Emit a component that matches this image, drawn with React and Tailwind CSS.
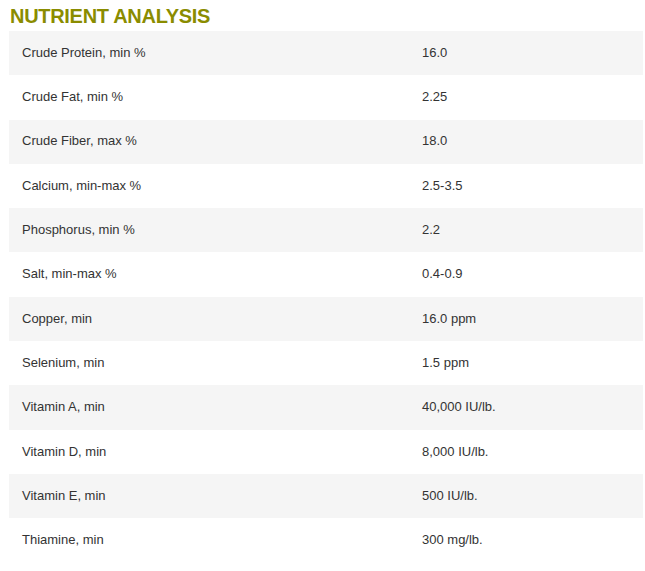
const rows = [
  ['Crude Protein, min %', '16.0'],
  ['Crude Fat, min %', '2.25'],
  ['Crude Fiber, max %', '18.0'],
  ['Calcium, min-max %', '2.5-3.5'],
  ['Phosphorus, min %', '2.2'],
  ['Salt, min-max %', '0.4-0.9'],
  ['Copper, min', '16.0 ppm'],
  ['Selenium, min', '1.5 ppm'],
  ['Vitamin A, min', '40,000 IU/lb.'],
  ['Vitamin D, min', '8,000 IU/lb.'],
  ['Vitamin E, min', '500 IU/lb.'],
  ['Thiamine, min', '300 mg/lb.'],
]

export default function App() {
  return (
    <div className="bg-white min-h-[571px] pl-[9px] pr-[2px] pt-[5px] font-['Liberation_Sans',Arial,sans-serif]">
      <h2 className="text-[20px] leading-[22px] font-bold text-[#8a8c00] uppercase tracking-[-0.3px] pl-[1px] mb-[4px]">
        Nutrient Analysis
      </h2>
      <div className="flex flex-col">
        {rows.map(([label, value], i) => (
          <div
            key={label}
            className={`grid grid-cols-[413px_1fr] h-[44.3px] items-center text-[13px] text-[#333] pb-[1px] ${i % 2 === 0 ? 'bg-[#f5f5f5]' : 'bg-white'}`}
          >
            <span className="pl-[13px]">{label}</span>
            <span>{value}</span>
          </div>
        ))}
      </div>
    </div>
  )
}
